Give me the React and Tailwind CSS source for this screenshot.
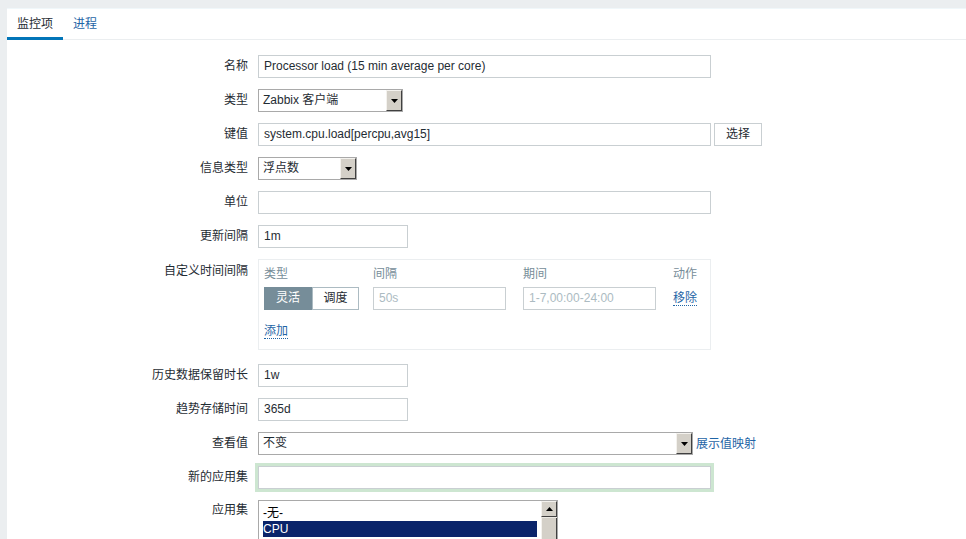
import React from 'react';

const font = { fontFamily: '"Liberation Sans", Arial, "Noto Sans CJK SC", sans-serif' };

function Label({ children, className = '' }) {
  return (
    <div className={`w-[251px] shrink-0 text-right pr-[10px] text-[12px] text-[#1f2c33] ${className}`}>
      {children}
    </div>
  );
}

function Row({ label, children, className = '', labelClass = 'leading-[23px]' }) {
  return (
    <div className={`flex items-start ${className}`}>
      <Label className={labelClass}>{label}</Label>
      <div className="flex items-center">{children}</div>
    </div>
  );
}

function TextInput({ value = '', width, placeholder }) {
  return (
    <div
      className={`h-[23px] border border-[#c9cfd2] bg-white px-[5px] text-[12px] leading-[21px] text-[#1f2c33] whitespace-nowrap ${width}`}
    >
      {value || <span className="text-[#acbbc2]">{placeholder}</span>}
    </div>
  );
}

function OldSelect({ value, width }) {
  return (
    <div className={`h-[23px] flex border border-[#a9a9a9] bg-white ${width}`}>
      <div className="flex-1 px-[4px] text-[12px] leading-[21px] text-[#1f2c33] whitespace-nowrap">{value}</div>
      <div className="w-[16px] h-[21px] bg-[#d4d0c8] border-t border-l border-t-[#f4f2ee] border-l-[#f4f2ee] border-r border-b border-r-[#404040] border-b-[#404040] flex items-center justify-center">
        <svg width="7" height="4" viewBox="0 0 7 4">
          <path d="M0 0h7L3.5 4z" fill="#000" />
        </svg>
      </div>
    </div>
  );
}

function Link({ children }) {
  return (
    <span className="text-[12px] text-[#1f65a6] border-b border-dotted border-[#1f65a6] leading-[14px]">{children}</span>
  );
}

export default function App() {
  return (
    <div className="min-h-[539px] w-[966px] bg-[#ebeef0] pt-[8px] pl-[7px] overflow-hidden" style={font}>
      <div className="bg-white h-[531px] overflow-hidden">
        <div className="flex h-[32px] border-b border-[#ebeef0] border-t border-t-[#f0f7fa]">
          <div className="px-[10px] pt-[6px] text-[12px] text-[#1f2c33] border-b-[3px] border-[#0275b8] h-[31px] w-[56px]">
            监控项
          </div>
          <div className="px-[10px] pt-[6px] text-[12px] text-[#1f65a6]">进程</div>
        </div>

        <div className="pt-[15px]">
          <Row label="名称">
            <TextInput value="Processor load (15 min average per core)" width="w-[453px]" />
          </Row>
          <Row label="类型" className="mt-[11px]">
            <OldSelect value="Zabbix 客户端" width="w-[145px]" />
          </Row>
          <Row label="键值" className="mt-[11px]">
            <TextInput value="system.cpu.load[percpu,avg15]" width="w-[453px]" />
            <div className="ml-[3px] h-[23px] w-[48px] border border-[#c9cfd2] bg-white text-center text-[12px] leading-[21px] text-[#1f2c33]">
              选择
            </div>
          </Row>
          <Row label="信息类型" className="mt-[11px]">
            <OldSelect value="浮点数" width="w-[99px]" />
          </Row>
          <Row label="单位" className="mt-[11px]">
            <TextInput width="w-[453px]" />
          </Row>
          <Row label="更新间隔" className="mt-[11px]">
            <TextInput value="1m" width="w-[150px]" />
          </Row>

          <Row label="自定义时间间隔" className="mt-[11px]" labelClass="pt-[5px] leading-[14px]">
            <div className="w-[453px] h-[91px] border border-[#ebeef0] px-[5px] pt-[6px]">
              <div className="flex text-[12px] text-[#768d99] leading-[16px]">
                <div className="w-[109px]">类型</div>
                <div className="w-[150px]">间隔</div>
                <div className="w-[150px]">期间</div>
                <div>动作</div>
              </div>
              <div className="flex items-center mt-[5px]">
                <div className="w-[109px] flex">
                  <div className="h-[23px] w-[48px] bg-[#768d99] text-white text-[12px] leading-[23px] text-center">灵活</div>
                  <div className="h-[23px] w-[47px] border border-[#acbbc2] text-[#1f2c33] text-[12px] leading-[21px] text-center">调度</div>
                </div>
                <div className="w-[150px]">
                  <TextInput placeholder="50s" width="w-[133px]" />
                </div>
                <div className="w-[150px]">
                  <TextInput placeholder="1-7,00:00-24:00" width="w-[133px]" />
                </div>
                <Link>移除</Link>
              </div>
              <div className="mt-[8px]">
                <Link>添加</Link>
              </div>
            </div>
          </Row>

          <Row label="历史数据保留时长" className="mt-[14px]">
            <TextInput value="1w" width="w-[150px]" />
          </Row>
          <Row label="趋势存储时间" className="mt-[11px]">
            <TextInput value="365d" width="w-[150px]" />
          </Row>
          <Row label="查看值" className="mt-[11px]">
            <OldSelect value="不变" width="w-[435px]" />
            <span className="ml-[3px] text-[12px] text-[#1f65a6]">展示值映射</span>
          </Row>
          <Row label="新的应用集" className="mt-[11px]">
            <div className="h-[23px] w-[453px] border border-[#c9cfd2] bg-white ring-[3px] ring-[#cde6d1]" />
          </Row>
          <Row label="应用集" className="mt-[11px]" labelClass="pt-[3px] leading-[14px]">
            <div className="w-[300px] h-[40px] flex border border-[#a9a9a9] border-b-0 bg-white">
              <div className="flex-1 pt-[4px] pl-[4px] pr-[4px] text-[12px] leading-[16px]">
                <div className="text-[#000]">-无-</div>
                <div className="bg-[#0a246a] text-white">CPU</div>
              </div>
              <div className="w-[16px] bg-[#ece9e3] flex flex-col">
                <div className="h-[16px] bg-[#d4d0c8] border-t border-l border-t-[#f4f2ee] border-l-[#f4f2ee] border-r border-b border-r-[#404040] border-b-[#404040] flex items-center justify-center">
                  <svg width="7" height="4" viewBox="0 0 7 4">
                    <path d="M3.5 0L7 4H0z" fill="#000" />
                  </svg>
                </div>
                <div className="flex-1 bg-[#d4d0c8] border-l border-l-[#f4f2ee] border-r border-r-[#404040] mt-[1px]" />
              </div>
            </div>
          </Row>
        </div>
      </div>
    </div>
  );
}
